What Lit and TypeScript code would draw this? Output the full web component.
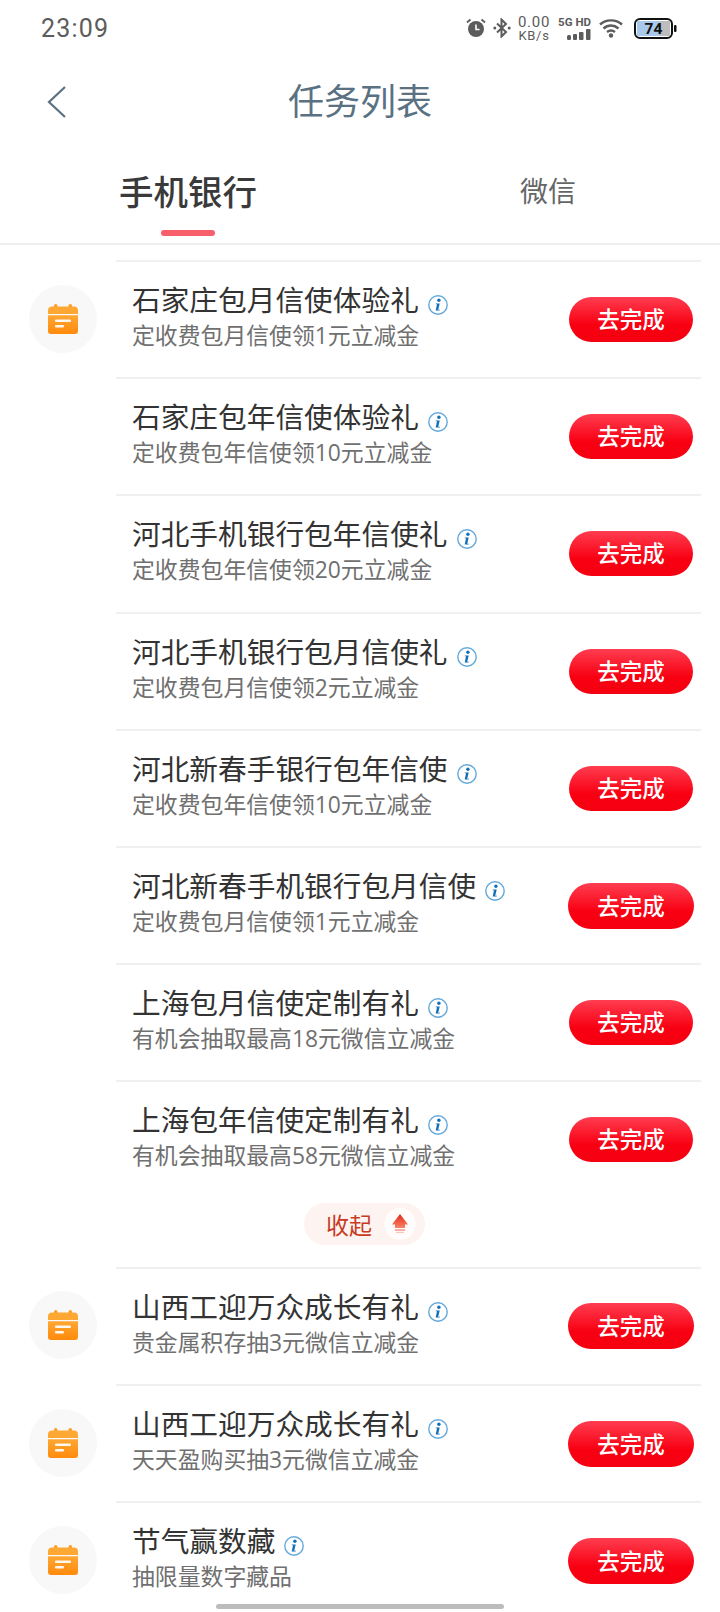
import { LitElement, html, css, svg } from "lit";
import { customElement } from "lit/decorators.js";

interface Task {
  title: string;
  sub: string;
  icon?: boolean;
  wide?: boolean;
}

const GROUP_ONE: Task[] = [
  { title: "石家庄包月信使体验礼", sub: "定收费包月信使领1元立减金", icon: true },
  { title: "石家庄包年信使体验礼", sub: "定收费包年信使领10元立减金" },
  { title: "河北手机银行包年信使礼", sub: "定收费包年信使领20元立减金" },
  { title: "河北手机银行包月信使礼", sub: "定收费包月信使领2元立减金" },
  { title: "河北新春手银行包年信使", sub: "定收费包年信使领10元立减金" },
  { title: "河北新春手机银行包月信使", sub: "定收费包月信使领1元立减金", wide: true },
  { title: "上海包月信使定制有礼", sub: "有机会抽取最高18元微信立减金" },
  { title: "上海包年信使定制有礼", sub: "有机会抽取最高58元微信立减金" },
];

const GROUP_TWO: Task[] = [
  { title: "山西工迎万众成长有礼", sub: "贵金属积存抽3元微信立减金", icon: true, wide: true },
  { title: "山西工迎万众成长有礼", sub: "天天盈购买抽3元微信立减金", icon: true, wide: true },
  { title: "节气赢数藏", sub: "抽限量数字藏品", icon: true, wide: true },
];

const calendarIcon = svg`
  <svg width="32" height="32" viewBox="0 0 32 32">
    <defs>
      <linearGradient id="cal" x1="0" y1="0" x2="0" y2="1">
        <stop offset="0" stop-color="#ffa733" />
        <stop offset="1" stop-color="#ff8a0c" />
      </linearGradient>
    </defs>
    <rect x="7" y="1" width="3.4" height="6" rx="1.7" fill="#ff9b1e" />
    <rect x="21.6" y="1" width="3.4" height="6" rx="1.7" fill="#ff9b1e" />
    <path d="M5 3.5h22a4 4 0 0 1 4 4v3.5H1V7.500a4 4 0 0 1 4-4z" fill="#ffa733" />
    <path d="M1 12.300h30V28a3 3 0 0 1-3 3H4a3 3 0 0 1-3-3z" fill="url(#cal)" />
    <rect x="8" y="16.500" width="16" height="2.600" rx="1" fill="#fff" opacity=".92" />
    <rect x="8" y="22" width="9" height="2.600" rx="1" fill="#fff" opacity=".92" />
  </svg>
`;

const infoIcon = svg`
  <svg class="info" width="20" height="20" viewBox="0 0 20 20">
    <circle cx="10" cy="10" r="9.200" fill="#fff" stroke="#63a9da" stroke-width="1.400" />
    <circle cx="10.900" cy="5.300" r="1.700" fill="#1270b8" />
    <path d="M7.800 8.400h3.900l-1.400 6.100c-.1.500.4.500 1.500.100l-.1.900H7.700l1.300-6.200H7.700z" fill="#1270b8" />
  </svg>
`;

@customElement("app-root")
export class AppRoot extends LitElement {
  static styles = css`
    :host {
      display: block;
      position: relative;
      width: 720px;
      height: 1612px;
      overflow: hidden;
      background: #fff;
      font-family: "Noto Sans CJK SC", "Noto Sans", sans-serif;
      color: #333;
    }

    .status {
      height: 56px;
      padding: 0 43px 0 41px;
      display: flex;
      align-items: center;
      justify-content: space-between;
      color: #5c5c5c;
      font-family: Roboto, sans-serif;
    }
    .time {
      font-size: 25px;
      letter-spacing: 1.2px;
    }
    .status-icons {
      display: flex;
      align-items: center;
    }
    .speed {
      width: 34px;
      margin: 0 7px 0 6px;
      display: flex;
      flex-direction: column;
      align-items: center;
      font-size: 13px;
      line-height: 13px;
      letter-spacing: 0.7px;
    }
    .speed b {
      font-weight: 400;
      font-size: 15px;
      line-height: 14px;
    }
    .net {
      width: 33px;
      margin-right: 8px;
      display: flex;
      flex-direction: column;
      align-items: flex-end;
      font-size: 11.500px;
      line-height: 12px;
      font-weight: 700;
      gap: 1px;
      white-space: nowrap;
    }
    .bt {
      margin-left: 7px;
    }

    .nav {
      height: 92px;
      display: grid;
      grid-template-columns: 1fr auto 1fr;
      align-items: center;
      color: #5a7182;
    }
    .back {
      padding-left: 47px;
      display: flex;
    }
    .nav h1 {
      margin: 0 0 6px;
      font-size: 36px;
      font-weight: 400;
      line-height: 48px;
    }

    .tabs {
      height: 97px;
      padding-left: 8px;
      display: grid;
      grid-template-columns: 360px 1fr;
      border-bottom: 2px solid #eeeeee;
      box-sizing: border-box;
    }
    .tab {
      position: relative;
      text-align: center;
      font-size: 28px;
      line-height: 84px;
      color: #666;
    }
    .tab + .tab {
      padding-left: 8px;
    }
    .tab.active {
      font-size: 34.500px;
      color: #3a3a3a;
      font-weight: 500;
    }
    .tab.active::after {
      content: "";
      position: absolute;
      left: 50%;
      top: 82px;
      width: 54px;
      height: 6px;
      margin-left: -27px;
      border-radius: 3px;
      background: #f85f6a;
    }

    .list {
      padding-top: 15px;
    }
    .row {
      height: 117.200px;
      display: flex;
    }
    .lead {
      width: 116px;
      flex: none;
      padding-left: 10px;
      box-sizing: border-box;
      display: flex;
      align-items: center;
      justify-content: center;
    }
    .disc {
      width: 68px;
      height: 68px;
      border-radius: 50%;
      background: #f8f8f8;
      display: flex;
      align-items: center;
      justify-content: center;
    }
    .body {
      flex: 1;
      margin-right: 19px;
      padding: 0 8px 0 16px;
      border-top: 2px solid #f0f0f0;
      display: flex;
      align-items: center;
      justify-content: space-between;
    }
    .text {
      margin-bottom: 6px;
    }
    .title {
      display: flex;
      align-items: center;
      gap: 9px;
      font-size: 28.700px;
      line-height: 38px;
      color: #333;
    }
    .info {
      margin-top: 12px;
    }
    .sub {
      font-family: "Open Sans", "Noto Sans CJK SC", sans-serif;
      font-size: 22.850px;
      line-height: 35px;
      color: #707070;
    }
    .go {
      width: 124px;
      height: 45px;
      flex: none;
      border-radius: 23px;
      background: linear-gradient(#ff3d50, #f80012 62%, #f50010);
      color: #fff;
      font-size: 22.500px;
      font-weight: 500;
      line-height: 43px;
      text-align: center;
    }
    .go.wide {
      width: 126px;
      margin-right: -1px;
      height: 46px;
      line-height: 44px;
    }

    .fold {
      height: 69.400px;
      padding: 5px 0 0 9px;
      box-sizing: border-box;
      display: flex;
      justify-content: center;
    }
    .pill {
      width: 121px;
      height: 42px;
      padding: 0 9px 0 22px;
      box-sizing: border-box;
      border-radius: 21px;
      background: #fdf3f1;
      display: flex;
      align-items: center;
      justify-content: space-between;
      color: #c93a22;
      font-size: 23px;
    }
    .pill i {
      width: 32px;
      height: 32px;
      border-radius: 50%;
      background: rgba(255, 255, 255, 0.7);
      display: flex;
      align-items: center;
      justify-content: center;
    }

    .home {
      position: absolute;
      left: 216px;
      bottom: 3px;
      width: 288px;
      height: 5px;
      border-radius: 3px;
      background: #bdbdbd;
    }
  `;

  renderRow(t: Task) {
    return html`
      <div class="row">
        <div class="lead">
          ${t.icon ? html`<div class="disc">${calendarIcon}</div>` : ""}
        </div>
        <div class="body">
          <div class="text">
            <div class="title">${t.title}${infoIcon}</div>
            <div class="sub">${t.sub}</div>
          </div>
          <div class="go ${t.wide ? "wide" : ""}">去完成</div>
        </div>
      </div>
    `;
  }

  renderStatus() {
    return html`
      <div class="status">
        <span class="time">23:09</span>
        <div class="status-icons">
          <svg width="20" height="20" viewBox="0 0 20 20">
            <circle cx="10" cy="11" r="8" fill="#5c5c5c" />
            <path d="M10 6.500v5h3.500" fill="none" stroke="#fff" stroke-width="1.600" />
            <path d="M1 4.500 4.500 1.500M19 4.500 15.500 1.500" stroke="#5c5c5c" stroke-width="1.800" />
          </svg>
          <svg class="bt" width="18" height="20" viewBox="0 0 18 20">
            <path d="M4 5.500 13 14l-4.500 4.500V1.500L13 6 4 14.500" fill="none" stroke="#5c5c5c" stroke-width="2" />
            <circle cx="1.800" cy="10" r="1.500" fill="#5c5c5c" />
            <circle cx="16.200" cy="10" r="1.500" fill="#5c5c5c" />
          </svg>
          <div class="speed"><b>0.00</b><span>KB/s</span></div>
          <div class="net">
            <span>5G HD</span>
            <svg width="24" height="11" viewBox="0 0 24 11">
              <rect x="0" y="6" width="4" height="5" rx="1.500" fill="#5c5c5c" />
              <rect x="6" y="5" width="4" height="6" rx="1" fill="#5c5c5c" />
              <rect x="12" y="3" width="4.500" height="8" rx="1" fill="#5c5c5c" />
              <rect x="19" y="0" width="4.500" height="11" rx="1" fill="#5c5c5c" />
            </svg>
          </div>
          <svg width="24" height="20" viewBox="0 0 24 20">
            <path d="M1 6.500C7 1 17 1 23 6.500M4.500 10.500c4.500-4 10.500-4 15 0M8 14c2.500-2 5.500-2 8 0" fill="none" stroke="#5c5c5c" stroke-width="2.400" />
            <circle cx="12" cy="17.500" r="2.200" fill="#5c5c5c" />
          </svg>
          <svg style="margin-left:11px" width="43" height="21" viewBox="0 0 43 21">
            <rect x="3" y="3" width="23" height="15" fill="#a9c9ec" />
            <rect x="26" y="3" width="10" height="15" fill="#bdbdbd" />
            <rect x="1" y="1" width="37" height="19" rx="5" fill="none" stroke="#111" stroke-width="2" />
            <rect x="40" y="7" width="2.500" height="7" rx="1" fill="#111" />
            <text x="19.500" y="16" text-anchor="middle" font-size="15.500" font-weight="700" font-family="Roboto, sans-serif" fill="#111">74</text>
          </svg>
        </div>
      </div>
    `;
  }

  render() {
    return html`
      ${this.renderStatus()}
      <div class="nav">
        <div class="back">
          <svg width="20" height="32" viewBox="0 0 20 32">
            <path d="M18 1 2 16l16 15" fill="none" stroke="#5a7182" stroke-width="2.200" />
          </svg>
        </div>
        <h1>任务列表</h1>
        <div></div>
      </div>
      <div class="tabs">
        <div class="tab active">手机银行</div>
        <div class="tab">微信</div>
      </div>
      <div class="list">
        ${GROUP_ONE.map((t) => this.renderRow(t))}
        <div class="fold">
          <div class="pill">
            收起
            <i>
              <svg width="18" height="20" viewBox="0 0 18 20">
                <defs>
                  <linearGradient id="up" x1="0" y1="0" x2="0" y2="1">
                    <stop offset="0" stop-color="#e2281a" />
                    <stop offset="1" stop-color="#fb8368" />
                  </linearGradient>
                </defs>
                <path d="M9 0l8 10.500H14V14H4v-3.500H1z" fill="url(#up)" />
                <rect x="4" y="15.300" width="10" height="1.500" fill="#f79a85" />
                <rect x="5" y="17.800" width="8" height="1.200" fill="#fbc6b9" />
              </svg>
            </i>
          </div>
        </div>
        ${GROUP_TWO.map((t) => this.renderRow(t))}
      </div>
      <div class="home"></div>
    `;
  }
}
